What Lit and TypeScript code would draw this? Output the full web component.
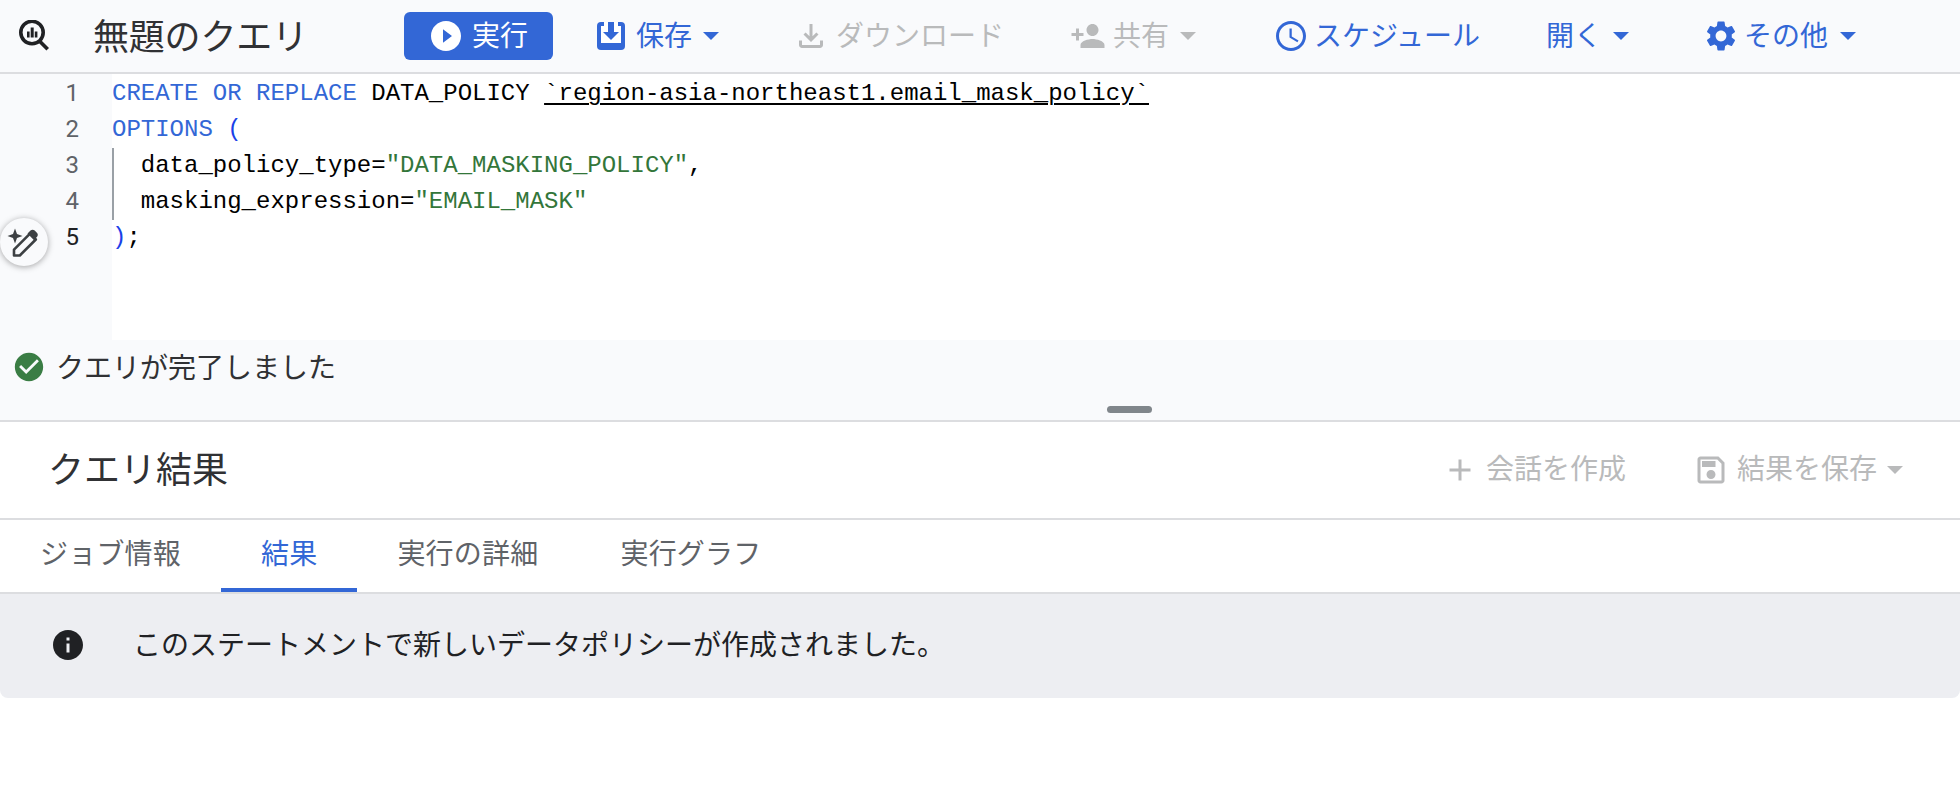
import { LitElement, html, css, svg } from "lit";
import { customElement } from "lit/decorators.js";

const P = {
  play: "M12 2C6.48 2 2 6.48 2 12s4.48 10 10 10 10-4.48 10-10S17.52 2 12 2zm-2 14.5v-9l6 4.5-6 4.5z",
  download: "M18 15v3H6v-3H4v3c0 1.1.9 2 2 2h12c1.1 0 2-.9 2-2v-3h-2zm-1-4-1.41-1.41L13 12.17V4h-2v8.17L8.41 9.59 7 11l5 5 5-5z",
  share: "M15 12c2.21 0 4-1.79 4-4s-1.79-4-4-4-4 1.79-4 4 1.79 4 4 4zm-9-2V7H4v3H1v2h3v3h2v-3h3v-2H6zm9 4c-2.67 0-8 1.34-8 4v2h16v-2c0-2.66-5.33-4-8-4z",
  clock: "M11.99 2C6.47 2 2 6.48 2 12s4.47 10 9.99 10C17.52 22 22 17.52 22 12S17.52 2 11.99 2zM12 20c-4.42 0-8-3.58-8-8s3.58-8 8-8 8 3.58 8 8-3.58 8-8 8zm.5-13H11v6l5.25 3.15.75-1.23-4.5-2.67z",
  gear: "M19.14 12.94c.04-.3.06-.61.06-.94 0-.32-.02-.64-.07-.94l2.03-1.58a.49.49 0 0 0 .12-.61l-1.92-3.32a.488.488 0 0 0-.59-.22l-2.39.96c-.5-.38-1.03-.7-1.62-.94l-.36-2.54a.484.484 0 0 0-.48-.41h-3.84c-.24 0-.43.17-.47.41l-.36 2.54c-.59.24-1.13.57-1.62.94l-2.39-.96c-.22-.08-.47 0-.59.22L2.74 8.87c-.12.21-.08.47.12.61l2.03 1.58c-.05.3-.09.63-.09.94s.02.64.07.94l-2.03 1.58a.49.49 0 0 0-.12.61l1.92 3.32c.12.22.37.29.59.22l2.39-.96c.5.38 1.03.7 1.62.94l.36 2.54c.05.24.24.41.48.41h3.84c.24 0 .44-.17.47-.41l.36-2.54c.59-.24 1.13-.56 1.62-.94l2.39.96c.22.08.47 0 .59-.22l1.92-3.32c.12-.22.07-.47-.12-.61l-2.01-1.58zM12 15.6c-1.98 0-3.6-1.62-3.6-3.6s1.62-3.6 3.6-3.6 3.6 1.62 3.6 3.6-1.62 3.6-3.6 3.6z",
  check: "M12 2C6.48 2 2 6.48 2 12s4.48 10 10 10 10-4.48 10-10S17.52 2 12 2zm-2 15-5-5 1.41-1.41L10 14.17l7.59-7.59L19 8l-9 9z",
  info: "M12 2C6.48 2 2 6.48 2 12s4.48 10 10 10 10-4.48 10-10S17.52 2 12 2zm1 15h-2v-6h2v6zm0-8h-2V7h2v2z",
  add: "M19 13h-6v6h-2v-6H5v-2h6V5h2v6h6v2z",
  saveOutline: "M17 3H5c-1.11 0-2 .9-2 2v14c0 1.1.89 2 2 2h14c1.1 0 2-.9 2-2V7l-4-4zm2 16H5V5h11.17L19 7.83V19zm-7-7c-1.66 0-3 1.34-3 3s1.34 3 3 3 3-1.34 3-3-1.34-3-3-3zM6 6h9v4H6z",
};

const icon = (d: string) =>
  html`<svg class="ic" viewBox="0 0 24 24" fill="currentColor" fill-rule="evenodd"><path d=${d}></path></svg>`;

const caret = html`<svg class="caret" viewBox="0 0 16 8" fill="currentColor"><path d="M0 0h16L8 8z"></path></svg>`;

const saveIcon = html`<svg class="ic" viewBox="0 0 36 36">
  <rect x="4" y="4" width="28" height="28" rx="4" fill="currentColor"></rect>
  <rect x="8" y="4" width="20" height="21" fill="#fff"></rect>
  <rect x="8" y="4" width="3" height="4" fill="currentColor"></rect>
  <rect x="25" y="4" width="3" height="4" fill="currentColor"></rect>
  <path d="M15 4h6v10h5l-8 8-8-8h5z" fill="currentColor"></path>
</svg>`;

const logo = svg`<circle cx="14" cy="12.5" r="11.2" fill="none" stroke="currentColor" stroke-width="3.6"></circle>
  <path d="M9 11.5h2.6v6H9zM12.7 7.5h3v10h-3zM16.8 11.5h2.6v6h-2.6z" fill="currentColor"></path>
  <path d="M23 20l8 8-2.6 2.6-8-8z" fill="currentColor"></path>`;

const spark = svg`<path d="M15 10.5l2 5.5 5.5 2-5.5 2-2 5.5-2-5.5-5.5-2 5.5-2z" fill="#3c4043"></path>
  <path d="M14 37.5v-5.8L30 15.7l5.8 5.8-16 16z" fill="none" stroke="#3c4043" stroke-width="2.6" stroke-linejoin="round"></path>
  <path d="M27.5 15.6l3-3c1.2-1.2 3-1.2 4.2 0l2.2 2.2c1.2 1.2 1.2 3 0 4.2l-3 3z" fill="#3c4043"></path>`;

@customElement("app-root")
export class AppRoot extends LitElement {
  static styles = css`
    :host {
      display: block;
      width: 1960px;
      height: 800px;
      background: #fff;
      overflow: hidden;
      font-family: Roboto, "Noto Sans CJK JP", sans-serif;
      color: #202124;
      font-size: 28px;
    }
    .ic { width: 36px; height: 36px; flex: none; display: block; }
    .caret { width: 16px; height: 8px; flex: none; margin-left: 4px; margin-right: 9px; }

    .toolbar {
      display: flex;
      align-items: center;
      height: 72px;
      background: #f9fafc;
      border-bottom: 2px solid #dcdde0;
    }
    .toolbar span { padding-bottom: 4px; }
    .logo { width: 32px; height: 32px; margin-left: 18px; color: #202124; flex: none; }
    .title { font-size: 36px; letter-spacing: -0.2px; margin-left: 43px; width: 311px; white-space: nowrap; color: #303134; padding-bottom: 4px; }
    .run {
      display: flex;
      align-items: center;
      gap: 8px;
      width: 149px;
      height: 48px;
      box-sizing: border-box;
      padding-left: 24px;
      border-radius: 6px;
      background: #3367d6;
      color: #fff;
      margin-right: 7px;
    }
    .btn {
      display: flex;
      align-items: center;
      gap: 7px;
      padding: 0 33px;
      color: #3367d6;
      white-space: nowrap;
    }
    .btn.off { color: #b9babb; }
    .btn.tight { gap: 5px; margin-left: 2px; }
    .btn.dl { margin-left: -1px; }
    .btn.more { margin-left: -1px; gap: 5px; }
    .btn.more .caret { margin-left: 7px; }

    .editor {
      display: flex;
      height: 266px;
      background: #fff;
      position: relative;
    }
    .gutter {
      width: 112px;
      flex: none;
      background: #f9fafc;
      box-sizing: border-box;
      padding: 1px 33px 0 0;
      text-align: right;
      font-size: 24px;
      line-height: 36px;
      color: #5f6368;
    }
    .gutter .on { color: #202124; }
    .code {
      font-family: "Liberation Mono", "DejaVu Sans Mono", monospace;
      font-size: 24px;
      line-height: 36px;
      color: #000;
      padding-top: 2px;
    }
    .line { height: 36px; white-space: pre; }
    .line.indent { box-shadow: inset 2px 0 0 #9aa0a6; }
    .kw { color: #3367d6; }
    .paren { color: #1a40e8; }
    .str { color: #33763a; }
    .u { text-decoration: underline; text-decoration-thickness: 2px; text-underline-offset: 3px; }
    .fab {
      position: absolute;
      left: 0;
      top: 144px;
      width: 48px;
      height: 48px;
      border-radius: 50%;
      background: #f9fafc;
      box-shadow: 0 1px 6px rgba(0, 0, 0, 0.35);
    }
    .fab svg { width: 48px; height: 48px; display: block; }

    .status {
      height: 80px;
      background: #f9fafc;
      border-bottom: 2px solid #dcdde0;
      display: flex;
      flex-direction: column;
      align-items: center;
    }
    .status-row {
      align-self: stretch;
      height: 54px;
      display: flex;
      align-items: center;
      gap: 10px;
      padding-left: 12px;
      color: #303134;
    }
    .status-row span { padding-bottom: 2px; }
    .status-row .ic { color: #3a7d44; width: 34px; height: 34px; }
    .handle {
      width: 45px;
      height: 7px;
      border-radius: 4px;
      background: #80868b;
      margin-top: 12px;
      margin-left: 298px;
    }

    .head {
      height: 96px;
      display: flex;
      align-items: center;
      border-bottom: 2px solid #dcdde0;
      padding: 0 48px 0 48px;
    }
    .head h2 { font-weight: 400; font-size: 36px; margin: 0; flex: 1; color: #303134; padding-bottom: 6px; }
    .head span { padding-bottom: 6px; }
    .head .btn { padding: 0; gap: 8px; }
    .head .btn.first { margin-right: 67px; }
    .head .caret { margin-left: 2px; }

    .tabs {
      height: 72px;
      display: flex;
      border-bottom: 2px solid #dcdde0;
      color: #5f6368;
      letter-spacing: 0.2px;
    }
    .tab {
      padding: 0 40px 9px;
      display: flex;
      align-items: center;
      height: 72px;
      box-sizing: border-box;
      white-space: nowrap;
    }
    .tab:last-child { margin-left: 2px; }
    .tab.on { color: #3367d6; box-shadow: inset 0 -4px 0 #3367d6; }

    .banner {
      height: 104px;
      background: #edeef2;
      border-radius: 0 0 8px 8px;
      display: flex;
      align-items: center;
      padding-left: 50px;
      gap: 47px;
      color: #202124;
    }
    .banner .ic { margin-bottom: 2px; }
    .banner span { padding-bottom: 6px; }
  `;

  render() {
    return html`
      <div class="toolbar">
        <svg class="logo" viewBox="0 0 32 32">${logo}</svg>
        <div class="title">無題のクエリ</div>
        <div class="run">${icon(P.play)}<span>実行</span></div>
        <div class="btn">${saveIcon}<span>保存</span>${caret}</div>
        <div class="btn off dl">${icon(P.download)}<span>ダウンロード</span></div>
        <div class="btn off">${icon(P.share)}<span>共有</span>${caret}</div>
        <div class="btn tight">${icon(P.clock)}<span>スケジュール</span></div>
        <div class="btn"><span>開く</span>${caret}</div>
        <div class="btn more">${icon(P.gear)}<span>その他</span>${caret}</div>
      </div>

      <div class="editor">
        <div class="gutter">
          <div>1</div><div>2</div><div>3</div><div>4</div><div class="on">5</div>
        </div>
        <div class="code">
          <div class="line"><span class="kw">CREATE OR REPLACE</span> DATA_POLICY <span class="u">\`region-asia-northeast1.email_mask_policy\`</span></div>
          <div class="line"><span class="kw">OPTIONS</span> <span class="paren">(</span></div>
          <div class="line indent">  data_policy_type=<span class="str">"DATA_MASKING_POLICY"</span>,</div>
          <div class="line indent">  masking_expression=<span class="str">"EMAIL_MASK"</span></div>
          <div class="line"><span class="paren">)</span>;</div>
        </div>
        <div class="fab"><svg viewBox="0 0 48 48">${spark}</svg></div>
      </div>

      <div class="status">
        <div class="status-row">${icon(P.check)}<span>クエリが完了しました</span></div>
        <div class="handle"></div>
      </div>

      <div class="head">
        <h2>クエリ結果</h2>
        <div class="btn off first">${icon(P.add)}<span>会話を作成</span></div>
        <div class="btn off">${icon(P.saveOutline)}<span>結果を保存</span>${caret}</div>
      </div>

      <div class="tabs">
        <div class="tab">ジョブ情報</div>
        <div class="tab on">結果</div>
        <div class="tab">実行の詳細</div>
        <div class="tab">実行グラフ</div>
      </div>

      <div class="banner">
        ${icon(P.info)}
        <span>このステートメントで新しいデータポリシーが作成されました。</span>
      </div>
    `;
  }
}
